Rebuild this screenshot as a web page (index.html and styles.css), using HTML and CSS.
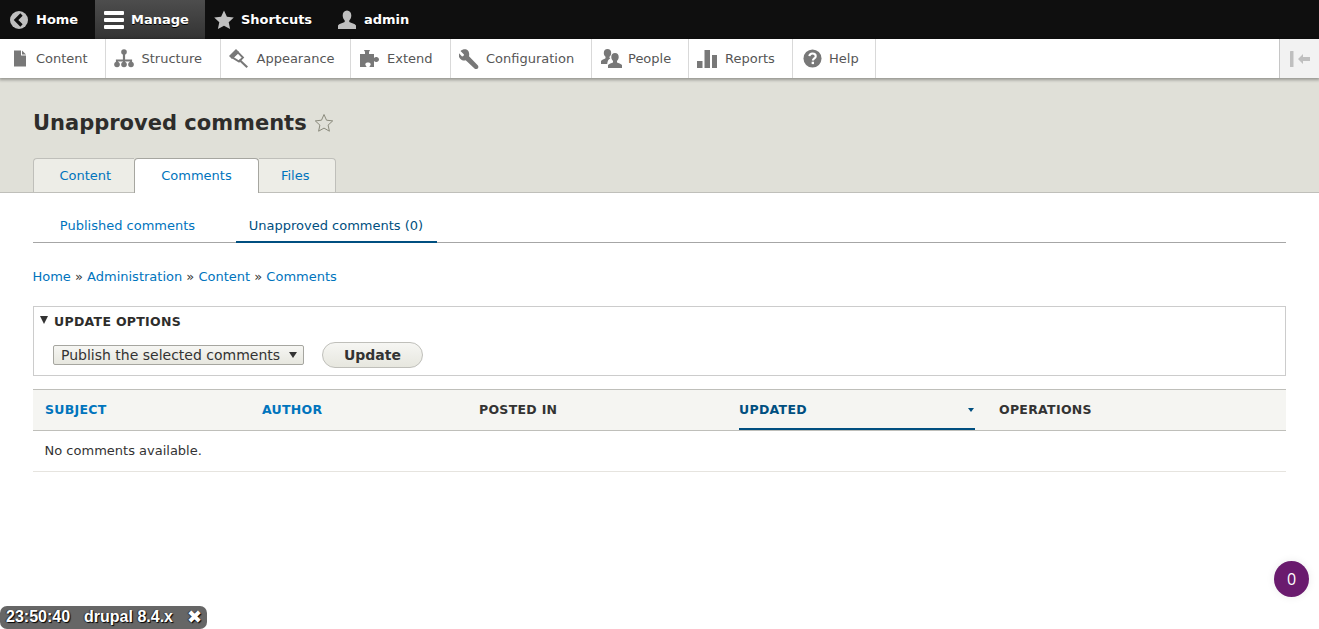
FILE: index.html
```html
<!DOCTYPE html>
<html lang="en">
<head>
<meta charset="utf-8">
<title>Unapproved comments</title>
<link rel="stylesheet" href="styles.css">
</head>
<body>
<nav class="topbar">
  <a class="top-item top-home"><svg class="top-icon" viewBox="0 0 20 20"><circle cx="10" cy="10" r="9" fill="#bfbfbf"/><path d="M12.5 4.500 7 10l5.500 5.500" fill="none" stroke="#0f0f0f" stroke-width="3.200"/></svg>Home</a>
  <a class="top-item top-manage"><svg class="top-icon manage-icon" viewBox="0 0 20 20"><rect y="1" width="20" height="4" rx="1" fill="#fff"/><rect y="8" width="20" height="4" rx="1" fill="#fff"/><rect y="15" width="20" height="4" rx="1" fill="#fff"/></svg>Manage</a>
  <a class="top-item top-shortcuts"><svg class="top-icon" viewBox="0 0 20 20"><path d="M10 .5l2.900 6.300 6.900.8-5.100 4.700 1.400 6.800L10 15.700l-6.100 3.400 1.400-6.800L.2 7.600l6.900-.8z" fill="#bfbfbf"/></svg>Shortcuts</a>
  <a class="top-item top-admin"><svg class="top-icon" viewBox="0 0 20 20"><path d="M10 .5c2.800 0 4.300 2.200 4.300 5 0 2.300-1 4-2 5v1.500c2 .8 5.700 1.800 6.700 3.500v3.500H1v-3.500c1-1.700 4.700-2.700 6.700-3.500v-1.500c-1-1-2-2.700-2-5 0-2.800 1.500-5 4.300-5z" fill="#bfbfbf"/></svg>admin</a>
</nav>
<nav class="tray">
  <a class="tray-item w-content"><svg class="tray-icon" viewBox="0 0 16 16"><path d="M2 0h7v5h5v11H2zM10 0l4 4h-4z" fill="#787878"/></svg>Content</a>
  <a class="tray-item w-structure"><svg class="tray-icon" viewBox="0 0 20 20"><path d="M10 4v8M3 15v-3.500h14V15M10 11v4" fill="none" stroke="#787878" stroke-width="2.200"/><circle cx="10" cy="3" r="2.800" fill="#787878"/><circle cx="3" cy="15.500" r="2.800" fill="#787878"/><circle cx="10" cy="15.500" r="2.800" fill="#787878"/><circle cx="17" cy="15.500" r="2.800" fill="#787878"/></svg>Structure</a>
  <a class="tray-item w-appearance"><svg class="tray-icon" viewBox="0 0 20 20"><path d="M7 0 10 3 3 10 0 7z" fill="#787878"/><path d="M9 3.500 14 8.500 10 12.500 3.500 8.500z" fill="none" stroke="#787878" stroke-width="1.800"/><path d="M11 10l8 7.500-1.500 1.500-8-7.500z" fill="#787878"/></svg>Appearance</a>
  <a class="tray-item w-extend"><svg class="tray-icon" viewBox="0 0 20 20"><path d="M1 5h5V3.500C6 2 5 2 5 1h6c0 1-1 1-1 2.500V5h5v4c1-.8 1.500-1 2.500-1 1.200 0 2.500 1 2.500 2.500S18.700 13 17.500 13c-1 0-1.500-.2-2.500-1v6h-4.500c0-1 1.200-1.500 1.200-2.800 0-1-1.200-1.700-2.700-1.700s-2.700.7-2.700 1.700c0 1.300 1.200 1.800 1.200 2.800H1z" fill="#787878"/></svg>Extend</a>
  <a class="tray-item w-config"><svg class="tray-icon" viewBox="0 0 20 20"><path d="M7.500.5C5.500 0 3 .5 1.500 2L5 5.500 4.500 7 3 7.500-.2 4C-.7 6.500 0 8.500 1.500 10c1.500 1.400 3.300 1.800 5.200 1.300l8.800 8.300c.9.800 2.300.8 3.200-.1.900-.9.900-2.300 0-3.200L10 7.200C10.700 4.200 9.700 1.400 7.500.5z" fill="#787878"/></svg>Configuration</a>
  <a class="tray-item w-people"><svg class="tray-icon" viewBox="0 0 21 19"><path d="M6.500 0c2.300 0 3.700 1.700 3.700 3.900 0 1.700-.8 3-1.700 3.800v1.200l.8.500C7.500 10.400 6.500 11.500 6.200 15H0v-3c.7-1 3-1.700 4.500-2.700V7.700c-.9-.8-1.700-2.100-1.700-3.800C2.800 1.700 4.200 0 6.500 0z" fill="#787878"/><path d="M14 4c2.300 0 3.700 1.700 3.700 3.900 0 1.700-.8 3-1.700 3.900v1.700c1.500.7 4 1.300 5 2.500v3H7v-3c1-1.200 3.500-1.800 5-2.500v-1.700c-.9-.9-1.700-2.200-1.700-3.900C10.300 5.700 11.700 4 14 4z" fill="#787878"/></svg>People</a>
  <a class="tray-item w-reports"><svg class="tray-icon" viewBox="0 0 20 20"><rect y="12" width="5.500" height="7" fill="#787878"/><rect x="7.500" y="1" width="5.500" height="18" fill="#787878"/><rect x="15" y="6" width="5.500" height="13" fill="#787878"/></svg>Reports</a>
  <a class="tray-item w-help"><svg class="tray-icon" viewBox="0 0 20 20"><circle cx="10" cy="10" r="9.500" fill="#787878"/><path d="M6.700 7.600C6.900 5.700 8.200 4.700 10 4.700c2 0 3.400 1.100 3.400 2.800 0 2.500-3 2.300-3 4.700" fill="none" stroke="#fff" stroke-width="2.200"/><rect x="9.100" y="13.400" width="2.500" height="2.500" fill="#fff"/></svg>Help</a>
  <div class="tray-fill"></div>
  <a class="tray-toggle"><svg class="toggle-icon" viewBox="0 0 20 16"><rect y="0" width="3.500" height="16" rx=".5" fill="#bfbfbf"/><path d="M8 8l5-5v3h7v4h-7v3z" fill="#bfbfbf"/></svg></a>
</nav>
<header class="page-head">
  <h1 class="page-title">Unapproved comments<svg class="title-star" viewBox="0 0 20 20"><path d="M10 1.500l2.500 5.700 6.200.7-4.600 4.200 1.300 6.100-5.400-3.100-5.400 3.100 1.300-6.100L1.300 7.900l6.200-.7z" fill="none" stroke="#8a8a7c" stroke-width="1"/></svg></h1>
  <ul class="tabs">
    <li class="tab tab-content">Content</li>
    <li class="tab tab-active">Comments</li>
    <li class="tab tab-files">Files</li>
  </ul>
</header>
<main class="main">
  <ul class="subtabs">
    <li class="subtab sub-published">Published comments</li>
    <li class="subtab sub-active">Unapproved comments (0)</li>
  </ul>
  <div class="breadcrumb"><a>Home</a> » <a>Administration</a> » <a>Content</a> » <a>Comments</a></div>
  <section class="options">
    <div class="options-title"><span class="caret"></span>UPDATE OPTIONS</div>
    <div class="options-row">
      <div class="select">Publish the selected comments<span class="select-arrow"></span></div>
      <button class="update-btn">Update</button>
    </div>
  </section>
  <table class="comments">
    <thead>
      <tr>
        <th class="col-subject"><a>SUBJECT</a></th>
        <th class="col-author"><a>AUTHOR</a></th>
        <th class="col-posted">POSTED IN</th>
        <th class="col-updated"><span class="updated-inner"><a>UPDATED</a><span class="sort-arrow"></span></span></th>
        <th class="col-ops">OPERATIONS</th>
      </tr>
    </thead>
    <tbody>
      <tr><td colspan="5">No comments available.</td></tr>
    </tbody>
  </table>
</main>
<div class="badge">0</div>
<div class="devbar"><span>23:50:40</span><span>drupal 8.4.x</span><span class="devbar-x">✖</span></div>
</body>
</html>
```
FILE: styles.css
```css
* { box-sizing: border-box; }
html, body { margin: 0; padding: 0; }
body {
  font-family: "DejaVu Sans", sans-serif;
  font-size: 13px;
  color: #333;
  background: #fff;
  height: 629px;
  overflow: hidden;
}
a { color: #0074bd; text-decoration: none; }

.topbar {
  display: flex;
  height: 39px;
  background: #0f0f0f;
}
.top-item {
  display: flex;
  align-items: center;
  color: #fff;
  font-weight: 700;
  font-size: 13px;
  text-shadow: 0 1px 0 #000;
}
.top-icon { width: 20px; height: 20px; margin-right: 7px; flex: none; }
.top-home { width: 95px; padding-left: 9px; }
.top-manage {
  width: 110px;
  padding-left: 9px;
  background: linear-gradient(#4d4d4d, #333);
}
.top-shortcuts { width: 122px; padding-left: 9px; }
.top-admin { padding-left: 10px; }

.tray {
  position: relative;
  display: flex;
  height: 39px;
  background: #fff;
  box-shadow: 0 1px 3px 1px rgba(0,0,0,.33);
  z-index: 2;
}
.tray-item {
  display: flex;
  align-items: center;
  height: 39px;
  color: #565656;
  font-size: 13px;
  border-right: 1px solid #d9d9d9;
}
.tray-icon { width: 20px; height: 20px; flex: none; margin-right: 7.500px; }
.w-content { width: 106px; padding-left: 12px; }
.w-content .tray-icon { width: 16px; height: 17px; margin-right: 8px; }
.w-structure { width: 115px; padding-left: 8px; }
.w-appearance { width: 130px; padding-left: 8px; }
.w-extend { width: 100px; padding-left: 8px; }
.w-extend .tray-icon { margin-right: 8px; }
.w-config { width: 141px; padding-left: 8px; }
.w-config .tray-icon { margin-right: 7px; }
.w-people { width: 97px; padding-left: 9px; }
.w-people .tray-icon { width: 21px; height: 19px; margin-right: 6px; }
.w-reports { width: 104px; padding-left: 8px; }
.w-reports .tray-icon { margin-right: 8px; }
.w-help { width: 83px; padding-left: 10px; }
.w-help .tray-icon { width: 19px; height: 19px; margin-right: 7px; }
.tray-fill { flex: 1; }
.tray-toggle {
  width: 40px;
  height: 39px;
  background: #f2f2f2;
  border-left: 1px solid #c6c6c6;
  display: flex;
  align-items: center;
  justify-content: center;
}
.toggle-icon { width: 20px; height: 16px; }

.page-head {
  height: 115px;
  background: #e0e0d8;
  border-bottom: 1px solid #bfbfba;
  padding: 0 2.500%;
  display: flex;
  flex-direction: column;
}
.page-title {
  margin: 30px 0 0;
  height: 51px;
  font-size: 21px;
  line-height: 30px;
  font-weight: 700;
  color: #2e2d2b;
  display: flex;
  align-items: flex-start;
}
.title-star { width: 20px; height: 20px; margin: 5px 0 0 7px; }
.tabs {
  list-style: none;
  display: flex;
  margin: 0;
  padding: 0;
  height: 34px;
}
.tab {
  height: 34px;
  background: #ededE7;
  border: 1px solid #bfbfba;
  border-bottom: 0;
  border-radius: 4px 4px 0 0;
  color: #0074bd;
  text-align: center;
  line-height: 33px;
}
.tab-content {
  width: 101px;
  border-right: 0;
  border-radius: 4px 0 0 0;
  text-align: left;
  padding-left: 25.500px;
}
.tab-active {
  width: 125px;
  height: 35px;
  background: #fff;
  border-color: #a6a6a0;
  position: relative;
  z-index: 1;
}
.tab-files {
  width: 77px;
  border-left: 0;
  border-radius: 0 4px 0 0;
  text-align: left;
  padding-left: 22px;
}

.main { padding: 0 2.500%; }
.subtabs {
  list-style: none;
  display: flex;
  margin: 0;
  padding: 0;
  height: 50px;
  border-bottom: 1px solid #a6a6a6;
}
.subtab {
  height: 50px;
  line-height: 65px;
  text-align: center;
  color: #0074bd;
}
.sub-published { width: 189px; }
.sub-active {
  margin-left: 14px;
  width: 201px;
  padding-right: 1px;
  color: #004f80;
  border-bottom: 2px solid #004f80;
}
.breadcrumb { margin: 24px 0 0 -.5px; height: 20px; line-height: 20px; color: #333; }
.options {
  margin-top: 19px;
  height: 70px;
  border: 1px solid #ccc;
}
.options-title {
  display: flex;
  align-items: center;
  margin: 6px 0 0 6px;
  height: 16px;
  font-size: 12.500px;
  font-weight: 700;
  letter-spacing: .3px;
  color: #2e2d2b;
}
.caret {
  width: 0;
  height: 0;
  border: 4.500px solid transparent;
  border-top: 8px solid #333;
  border-bottom: 0;
  margin-right: 6px;
  margin-top: -3px;
}
.options-row {
  display: flex;
  align-items: center;
  margin: 13px 0 0 19px;
}
.select {
  width: 251px;
  height: 20px;
  border: 1px solid #a6a6a0;
  border-radius: 2px;
  background: linear-gradient(#f6f6f3, #e7e7df);
  font-size: 14px;
  line-height: 18px;
  padding-left: 7px;
  color: #333;
  position: relative;
  white-space: nowrap;
}
.select-arrow {
  position: absolute;
  right: 6px;
  top: 6px;
  border: 4.500px solid transparent;
  border-top: 6px solid #333;
  border-bottom: 0;
}
.update-btn {
  margin-left: 18px;
  width: 101px;
  height: 26px;
  padding: 0;
  border: 1px solid #bfbfba;
  border-radius: 20px;
  background: linear-gradient(#f6f6f3, #e7e7df);
  font-family: "DejaVu Sans", sans-serif;
  font-weight: 700;
  font-size: 14px;
  color: #333;
}
.comments {
  width: 100%;
  margin-top: 13px;
  border-collapse: separate;
  border-spacing: 0;
  table-layout: fixed;
}
.comments th {
  height: 42px;
  background: #f5f5f2;
  border-top: 1px solid #bfbfba;
  border-bottom: 1px solid #bfbfba;
  text-align: left;
  padding: 0 12px 2px;
  font-size: 12.500px;
  letter-spacing: .3px;
  font-weight: 700;
  color: #333;
}
.col-subject { width: 217px; }
.col-author { width: 217px; }
.col-posted { width: 272px; }
.col-updated { width: 248px; }
.comments th.col-updated { padding: 0; }
.updated-inner {
  display: flex;
  align-items: center;
  justify-content: space-between;
  width: 236px;
  height: 40px;
  border-bottom: 2px solid #004f80;
  padding-right: 1px;
  padding-top: 1px;
}
.updated-inner a { color: #004f80; }
.sort-arrow {
  border: 3.500px solid transparent;
  border-top: 4px solid #004f80;
  border-bottom: 0;
}
.comments td {
  height: 41px;
  padding: 0 12px 2px 11.600px;
  border-bottom: 1px solid #e6e4df;
  color: #333;
}

.badge {
  position: absolute;
  left: 1274px;
  top: 561px;
  width: 35px;
  height: 36px;
  border-radius: 50%;
  background: #6a1b6e;
  color: #fff;
  font-family: "Open Sans", sans-serif;
  font-size: 16px;
  line-height: 36px;
  text-align: center;
  box-shadow: 0 0 8px rgba(0,0,0,.08);
}
.devbar {
  position: absolute;
  left: 0;
  top: 606px;
  width: 207px;
  height: 23px;
  display: flex;
  align-items: center;
  background: #666;
  border-radius: 7px;
  font-family: "Liberation Sans", sans-serif;
  font-size: 16px;
  font-weight: 700;
  color: #fff;
  text-shadow: 1px 1px 1px #000, -1px 0 1px #333;
  padding: 0 0 2px 6px;
  gap: 14px;
}
.devbar-x { font-family: "DejaVu Sans", sans-serif; font-size: 18px; }
```
